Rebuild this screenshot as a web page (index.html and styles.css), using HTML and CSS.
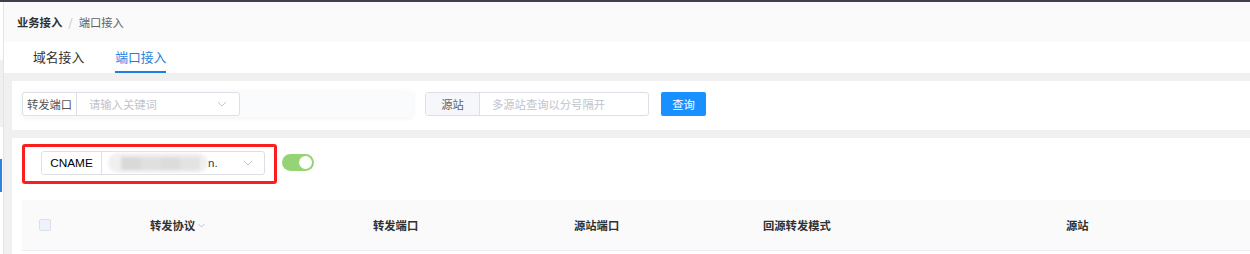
FILE: index.html
```html
<!DOCTYPE html>
<html lang="zh">
<head>
<meta charset="utf-8">
<link rel="stylesheet" href="styles.css">
</head>
<body>
<div class="topbar"></div>
<div class="main">
  <aside class="side">
    <div class="seg seg-w1"></div>
    <div class="seg seg-g"></div>
    <div class="seg seg-w2"></div>
    <div class="seg seg-b"></div>
  </aside>
  <div class="content">
    <div class="crumb">
      <span class="crumb-strong">业务接入</span>
      <span class="crumb-sep">/</span>
      <span class="crumb-cur">端口接入</span>
    </div>
    <div class="tabs">
      <div class="tab">域名接入</div>
      <div class="tab active">端口接入</div>
    </div>
    <div class="panel">
      <div class="card card-filter">
        <div class="ghost">
          <div class="group group-1">
            <div class="prepend prepend-plain">转发端口</div>
            <div class="field">
              <span class="ph">请输入关键词</span>
              <svg class="chev" width="10" height="6" viewBox="0 0 10 6"><polyline points="1,1 5,5 9,1" fill="none" stroke="#c0c4cc" stroke-width="1"/></svg>
            </div>
          </div>
        </div>
        <div class="group group-2">
          <div class="prepend prepend-gray">源站</div>
          <div class="field">
            <span class="ph">多源站查询以分号隔开</span>
          </div>
        </div>
        <button class="btn">查询</button>
      </div>
      <div class="card card-list">
        <div class="row-top">
          <div class="redbox">
            <div class="group group-3">
              <div class="prepend prepend-cname">CNAME</div>
              <div class="field field-cname">
                <span class="blur"><i></i><i></i><i></i><i></i></span>
                <span class="val">n.</span>
                <svg class="chev" width="10" height="6" viewBox="0 0 10 6"><polyline points="1,1 5,5 9,1" fill="none" stroke="#c0c4cc" stroke-width="1"/></svg>
              </div>
            </div>
          </div>
          <div class="switch"><span class="knob"></span></div>
        </div>
        <div class="thead">
          <div class="th th-check"><span class="checkbox"></span></div>
          <div class="th">转发协议<svg class="sort" width="7" height="5" viewBox="0 0 7 5"><polyline points="0.5,1 3.5,4 6.5,1" fill="none" stroke="#c0c4cc" stroke-width="1"/></svg></div>
          <div class="th">转发端口</div>
          <div class="th">源站端口</div>
          <div class="th">回源转发模式</div>
          <div class="th">源站</div>
        </div>
      </div>
    </div>
  </div>
</div>
</body>
</html>
```

FILE: styles.css
```css
* { box-sizing: border-box; }
html, body { margin: 0; padding: 0; }
body {
  width: 1250px;
  height: 254px;
  overflow: hidden;
  background: #fff;
  font-family: "Noto Sans CJK SC", "Liberation Sans", sans-serif;
  font-size: 11.3px;
  color: #303133;
}
.topbar { height: 2px; background: #3d4049; }
.main { display: flex; height: 252px; }
.side {
  width: 4px;
  border-right: 1px solid #e4e4e4;
  display: flex;
  flex-direction: column;
  background: #fff;
}
.seg-w1 { height: 58px; background: #fff; }
.seg-g { height: 67px; background: #f0f0f0; }
.seg-w2 { height: 32px; background: #fff; }
.seg-b { height: 33px; width: 2px; background: #2f80e0; }
.content { flex: 1; background: #f0f0f0; display: flex; flex-direction: column; }
.crumb {
  height: 40px;
  background: #fafafa;
  display: flex;
  align-items: center;
  padding-left: 13px;
}
.crumb-strong { font-weight: bold; color: #303133; }
.crumb-sep { color: #c0c4cc; margin: 0 6px 0 6px; }
.crumb-cur { color: #606266; }
.tabs {
  height: 31px;
  background: #fff;
  display: flex;
  gap: 31px;
  padding-left: 29px;
}
.tab {
  font-size: 12.8px;
  color: #303133;
  height: 31px;
  line-height: 29px;
  border-bottom: 2px solid transparent;
}
.tab.active { color: #1f7fe0; border-bottom-color: #1f7fe0; }
.panel { padding: 8px 0 0 8px; display: flex; flex-direction: column; gap: 8px; flex: 1; }
.card { background: #fff; padding: 0 0 0 10px; }
.card-filter {
  height: 49px;
  display: flex;
  align-items: flex-start;
  padding-top: 10px;
}
.ghost {
  width: 391px;
  height: 26px;
  background: #fafbfd;
  border-radius: 4px;
  box-shadow: 0 1px 5px rgba(40, 60, 100, 0.07);
  padding-top: 1px;
}
.group {
  display: flex;
  height: 24px;
  border: 1px solid #dcdfe6;
  border-radius: 3px;
  background: #fff;
}
.group-1 { width: 218px; }
.group-2 { width: 224px; margin-left: 12px; margin-top: 1px; }
.prepend {
  display: flex;
  align-items: center;
  justify-content: center;
  border-right: 1px solid #dcdfe6;
  flex: none;
}
.prepend-plain { width: 54px; color: #555; background: #fff; border-radius: 3px 0 0 3px; }
.prepend-gray { width: 54px; background: #f5f7fa; color: #606266; }
.field {
  flex: 1;
  display: flex;
  align-items: center;
  padding: 0 12px 0 12px;
}
.ph { color: #c0c4cc; flex: 1; }
.chev { flex: none; }
.btn {
  margin-left: 12px;
  margin-top: 1px;
  width: 45px;
  height: 24px;
  border: none;
  border-radius: 2px;
  background: #1890ff;
  color: #fff;
  font-family: inherit;
  font-size: 11.3px;
  padding: 0;
}
.card-list { flex: 1; padding-top: 6px; }
.row-top { display: flex; align-items: flex-start; }
.redbox {
  width: 255px;
  height: 40px;
  border: 3px solid #fa1e1e;
  border-radius: 3px;
  padding: 4px 9px 0 16px;
}
.group-3 { width: 224px; }
.prepend-cname {
  width: 60px;
  background: #fff;
  color: #000;
  font-family: "Liberation Sans", sans-serif;
  font-size: 11.8px;
  border-radius: 3px 0 0 3px;
}
.field-cname { padding: 0 11px 0 6px; }
.blur {
  width: 100px;
  height: 20px;
  border-radius: 10px;
  background: #f0f0f0;
  display: flex;
  align-items: center;
  padding: 0 8px 0 13px;
  filter: blur(1.6px);
}
.blur i { display: block; height: 13px; flex: 1; background: #d9d9d9; }
.blur i:nth-child(2) { background: #e0e0e0; }
.blur i:nth-child(3) { background: #dcdcdc; }
.blur i:nth-child(4) { background: #e3e3e3; }
.val { color: #333; flex: 1; font-family: "Liberation Sans", sans-serif; font-size: 11.5px; }
.switch {
  margin-left: 5px;
  margin-top: 10px;
  width: 32px;
  height: 17px;
  border-radius: 9px;
  background: #95d475;
  display: flex;
  align-items: center;
  justify-content: flex-end;
  padding-right: 2px;
}
.knob { width: 13px; height: 13px; border-radius: 50%; background: #fff; }
.thead {
  margin-top: 16px;
  height: 51px;
  background: #fafafa;
  border-bottom: 1px solid #ebeef5;
  display: grid;
  grid-template-columns: 108px 223px 201px 189px 303px 1fr;
  align-items: center;
}
.th { padding-left: 20px; font-weight: bold; color: #303133; display: flex; align-items: center; }
.th-check { padding-left: 17px; }
.checkbox {
  width: 12px;
  height: 12px;
  border: 1px solid #dcdfe6;
  background: #edf2fc;
  border-radius: 2px;
}
.sort { margin-left: 3px; }
```
